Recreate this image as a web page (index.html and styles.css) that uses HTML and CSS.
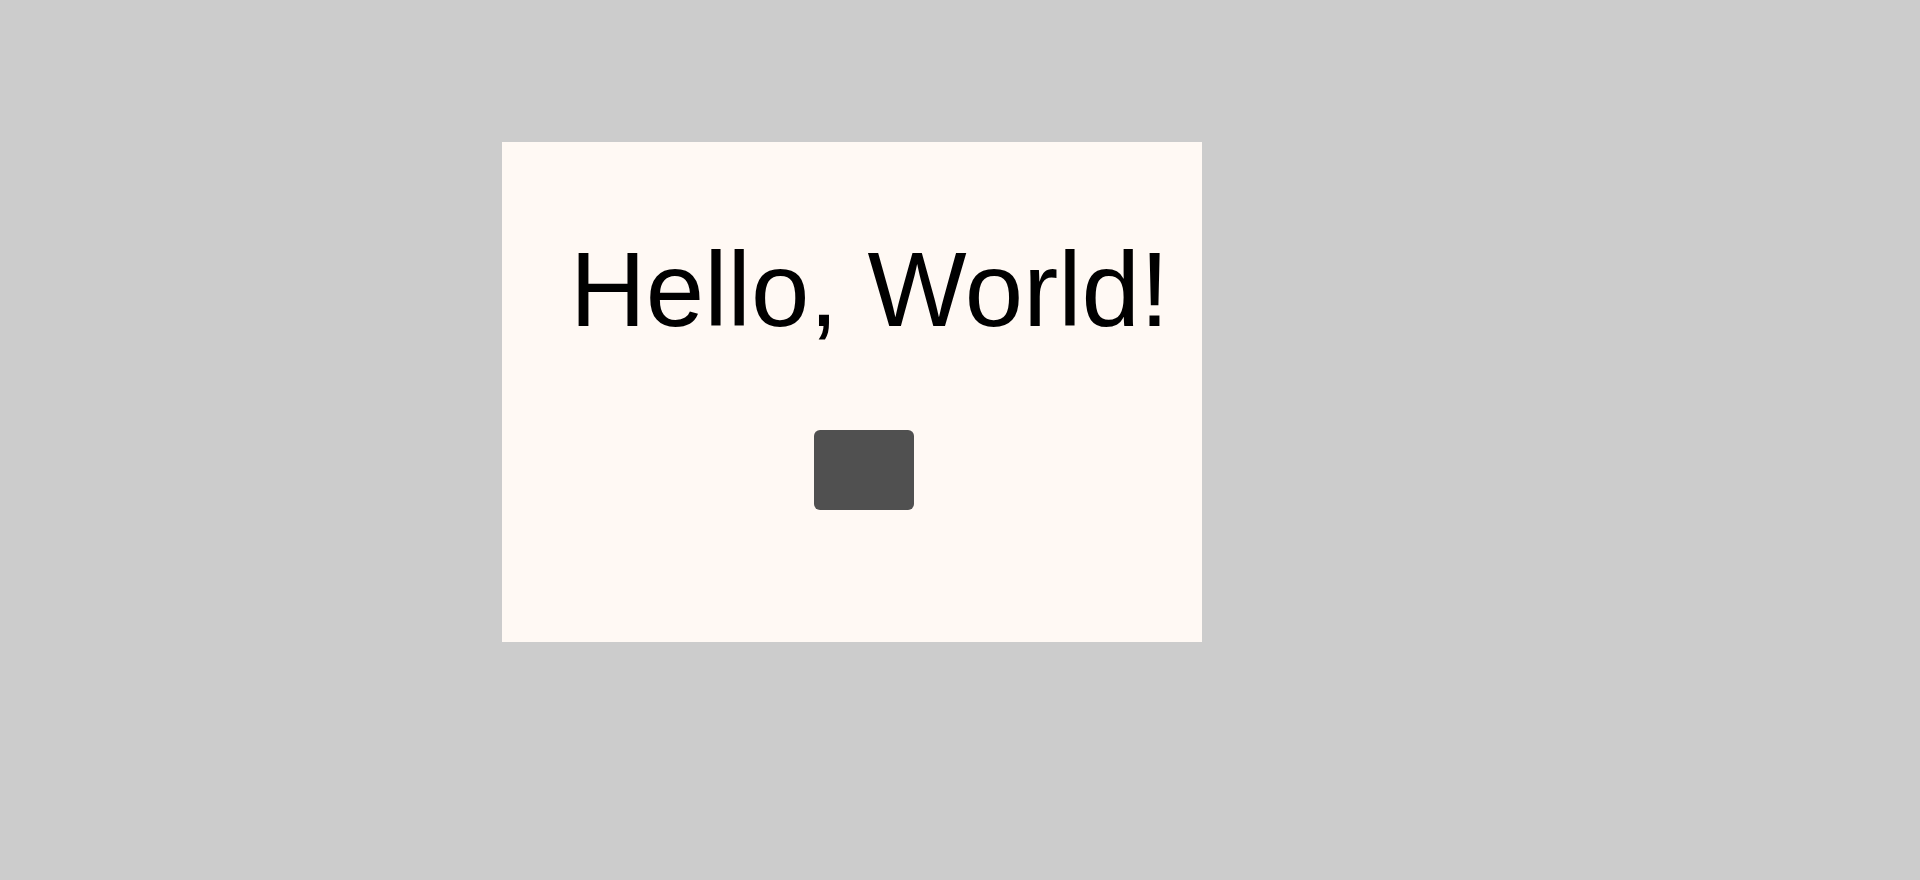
FILE: index.html
```html
<!DOCTYPE html>
<html>
<head>
<meta charset="utf-8">
<link rel="stylesheet" href="styles.css">
</head>
<body>
<div class="card">
  <h1 class="title">Hello, World!</h1>
  <button class="btn"></button>
</div>
</body>
</html>
```
FILE: styles.css
```css
html, body {
  margin: 0;
  padding: 0;
  background: #cccccc;
  width: 1920px;
  height: 880px;
}
body {
  padding: 142px 0 0 502px;
  box-sizing: border-box;
}
.card {
  width: 700px;
  height: 500px;
  box-sizing: border-box;
  background: #fff9f4;
  display: flex;
  flex-direction: column;
  align-items: flex-start;
  padding: 88px 0 0 68px;
}
.title {
  margin: 0;
  font-family: "Liberation Sans", Arial, sans-serif;
  font-weight: normal;
  font-size: 105px;
  line-height: 120px;
  color: #000;
  white-space: nowrap;
}
.btn {
  margin-top: 80px;
  margin-left: 244px;
  width: 100px;
  height: 80px;
  border: none;
  border-radius: 6px;
  background: #505050;
  padding: 0;
}
```
